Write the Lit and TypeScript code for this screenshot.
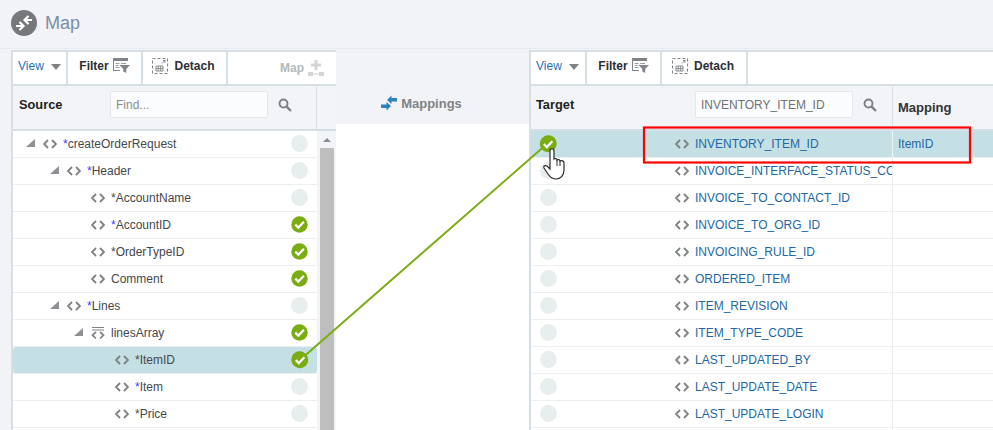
import { LitElement, html, css, svg } from "lit";
import { customElement } from "lit/decorators.js";

type Src = { name: string; req?: "blue" | "dark"; level: number; tri?: boolean; arr?: boolean; ok?: boolean; sel?: boolean };
const source: Src[] = [
  { name: "createOrderRequest", req: "blue", level: 0, tri: true },
  { name: "Header", req: "blue", level: 1, tri: true },
  { name: "AccountName", req: "dark", level: 2 },
  { name: "AccountID", req: "blue", level: 2, ok: true },
  { name: "OrderTypeID", req: "dark", level: 2, ok: true },
  { name: "Comment", level: 2, ok: true },
  { name: "Lines", req: "blue", level: 1, tri: true },
  { name: "linesArray", level: 2, tri: true, arr: true, ok: true },
  { name: "ItemID", req: "dark", level: 3, ok: true, sel: true },
  { name: "Item", req: "blue", level: 3 },
  { name: "Price", req: "dark", level: 3 },
  { name: "", level: 3 },
];
const target = [
  "INVENTORY_ITEM_ID",
  "INVOICE_INTERFACE_STATUS_CODE",
  "INVOICE_TO_CONTACT_ID",
  "INVOICE_TO_ORG_ID",
  "INVOICING_RULE_ID",
  "ORDERED_ITEM",
  "ITEM_REVISION",
  "ITEM_TYPE_CODE",
  "LAST_UPDATED_BY",
  "LAST_UPDATE_DATE",
  "LAST_UPDATE_LOGIN",
  "",
];

const code = html`<svg class="code" width="14" height="10" viewBox="0 0 14 10"><path d="M5 1 1 5l4 4M9 1l4 4-4 4" fill="none" stroke="#7f8285" stroke-width="1.9"/></svg>`;
const arr = html`<svg class="code" width="14" height="14" viewBox="0 0 14 14"><path d="M1 1.500h12M1 4h12" stroke="#7f8285" stroke-width="1.200"/><path d="M5 6 1.500 9.200 5 12.500M9 6l3.500 3.200L9 12.500" fill="none" stroke="#7f8285" stroke-width="1.700"/></svg>`;
const tri = html`<svg class="tri" width="9" height="9" viewBox="0 0 9 9"><path d="M9 0v8H0z" fill="#8d9094"/></svg>`;
const okIcon = html`<svg class="bubble" width="17" height="17" viewBox="0 0 17 17"><circle cx="8.500" cy="8.500" r="8.200" fill="#79ad12"/><path d="m4.300 8.600 3 3 5.600-5.800" fill="none" stroke="#fff" stroke-width="2.200"/></svg>`;
const emptyIcon = html`<svg class="bubble" width="17" height="17" viewBox="0 0 17 17"><circle cx="8.500" cy="8.500" r="8.400" fill="#e8eded"/></svg>`;
const search = html`<svg width="14" height="14" viewBox="0 0 14 14"><circle cx="5.500" cy="5.500" r="4" fill="none" stroke="#7d8084" stroke-width="1.900"/><path d="m8.600 8.600 4.400 4.400" stroke="#7d8084" stroke-width="2.400"/></svg>`;
const filter = html`<svg width="17" height="15" viewBox="0 0 17 15"><path d="M0 0h15v3H0zM0 3h1v9h6v1H0z" fill="#808488"/><path d="M2.500 5h4v1h-4zM2.500 7h3v1h-3zM2.500 9h4v1h-4zM8 5h5v1H8z" fill="#9a9da0"/><path d="M6.500 7H17l-3.800 4v4l-2.900-1.500V11z" fill="#808488"/></svg>`;
const detach = html`<svg width="16" height="16" viewBox="0 0 16 16"><rect x=".5" y=".5" width="15" height="15" fill="none" stroke="#808488" stroke-dasharray="3 2"/><path d="M4 8h7v5H4zM4 10.500h7M6.300 8v5M8.700 8v5" fill="none" stroke="#808488" stroke-width=".9"/><path d="m10 5.500 3-3M11 2.500h2v2" fill="none" stroke="#808488"/></svg>`;
const mapAdd = html`<svg width="16" height="17" viewBox="0 0 16 17"><path d="M6.500 0h3v3.500H13v3H9.500V10h-3V6.500H3v-3h3.500z" fill="#d2d4d6"/><path d="M0 12h5v4H0zM11 12h5v4h-5z" fill="#d2d4d6"/><path d="M5 14h6" stroke="#d2d4d6"/></svg>`;

@customElement("app-root")
export class AppRoot extends LitElement {
  static styles = css`
    :host { display: block; width: 993px; height: 430px; overflow: hidden; position: relative; background: #f2f3f6; font-family: "Liberation Sans", Arial, sans-serif; font-size: 12px; color: #3f4347; }
    .title { height: 49px; display: flex; align-items: flex-start; padding: 10px 0 0 11px; box-sizing: border-box; gap: 8px; border-bottom: 1px solid #e9ecef; font-size: 18px; color: #7b8ea6; line-height: 26px; }
    .columns { display: flex; height: 381px; overflow: hidden; }
    .panel { flex: none; background: #fff; border-left: 2px solid #d6dfe6; box-sizing: border-box; margin-top: 1px; }
    .left { width: 325px; margin-left: 11px; }
    .right { flex: 1; }
    .center { flex: none; width: 193px; background: #fff; }
    .band { height: 75px; background: #f1f3f6; display: flex; align-items: center; justify-content: center; gap: 4px; font-weight: bold; font-size: 13px; color: #7f8386; box-sizing: border-box; padding: 33px 22px 0 0; }
    .toolbar { display: flex; height: 36px; box-sizing: border-box; border-top: 2px solid #d6dfe6; border-bottom: 2px solid #d6dfe6; font-weight: bold; color: #2b2f33; }
    .tool { display: flex; align-items: center; border-right: 2px solid #d6dfe6; box-sizing: border-box; padding-bottom: 5px; }
    .view { width: 55px; padding-left: 5px; color: #1f71b8; font-weight: normal; gap: 7px; }
    .view i { width: 0; height: 0; border-left: 5px solid transparent; border-right: 5px solid transparent; border-top: 6px solid #7f8386; margin-top: 2px; }
    .filter { width: 75px; justify-content: center; gap: 4px; }
    .detach { width: 85px; justify-content: center; gap: 6px; padding-right: 2px; }
    .right .view { width: 56px; }
    .right .detach { width: 86px; }
    .mapbtn { flex: 1; display: flex; justify-content: flex-end; align-items: center; gap: 4px; padding: 0 12px 0 0; color: #b4b7ba; }
    .head { display: flex; height: 45px; box-sizing: border-box; background: #f2f4f7; border-bottom: 2px solid #d6dfe6; }
    .headmain { display: flex; flex: none; border-right: 1px solid #d6dfe6; box-sizing: border-box; }
    .left .headmain { width: 304px; }
    .right .headmain { width: 362px; }
    .headname { font-weight: bold; color: #222; font-size: 12.8px; padding: 11px 0 0 6px; width: 97px; box-sizing: border-box; }
    .right .headname { width: 164px; padding-left: 5px; }
    .find { width: 158px; height: 27px; margin-top: 5px; box-sizing: border-box; background: #fbfcfd; border: 1px solid #e4e8ec; border-radius: 2px; padding: 0 5px; display: flex; align-items: center; color: #6f7276; }
    .find.ph { color: #8a8d90; }
    .mag { margin: 12px 0 0 10px; }
    .body { display: flex; }
    .rows { width: 304px; flex: none; }
    .row { height: 27px; box-sizing: border-box; border-bottom: 1px solid #eceef0; display: flex; align-items: center; position: relative; color: #44484c; padding-bottom: 1px; }
    .row.sel { background: #c5e0e4; border-radius: 3px; }
    .ind { display: flex; align-items: center; flex: none; }
    .tri { flex: none; margin-right: 8px; }
    .code { flex: none; margin-right: 6px; }
    .star { color: #3a3aff; }
    .star.dark { color: #44484c; }
    .row .bubble { position: absolute; right: 9px; top: 4px; }
    .scrolltop { width: 19px; flex: none; background: #f2f4f7; }
    .scroll { width: 19px; flex: none; background: #f2f4f7; display: flex; flex-direction: column; align-items: center; }
    .arrow { width: 0; height: 0; border-left: 4px solid transparent; border-right: 4px solid transparent; border-bottom: 4px solid #8a8d90; margin: 7px 0 6px; }
    .thumb { width: 14px; flex: 1; background: #bebebe; }
    .mapping { font-weight: bold; padding: 14px 0 0 5px; color: #333; font-size: 13px; }
    .trow { height: 27px; box-sizing: border-box; border-bottom: 1px solid #eceef0; display: flex; }
    .trow.sel { background: #c5e0e4; }
    .tmain { width: 362px; flex: none; box-sizing: border-box; display: flex; align-items: center; overflow: hidden; white-space: nowrap; color: #2267a5; border-right: 1px solid #e8ecef; position: relative; padding: 0 0 1px 144px; }
    .sel .tmain { border-right-color: #eef6f7; }
    .tmain .bubble { position: absolute; left: 9px; top: 4px; }
    .tmap { padding: 6px 0 0 5px; color: #2267a5; }
    .overlay { position: absolute; left: 0; top: 0; pointer-events: none; }
  `;
  render() {
    return html`
      <div class="title">
        <svg width="26" height="26" viewBox="0 0 26 26"><circle cx="13" cy="13" r="13" fill="#76797c"/><path d="M21 10h-6.500M17.500 6l-4 4 4 4" fill="none" stroke="#fff" stroke-width="2.200"/><path d="M5 16h6.500M8.500 12l4 4-4 4" fill="none" stroke="#fff" stroke-width="2.200"/></svg>
        <span>Map</span>
      </div>
      <div class="columns">
        <section class="panel left">
          <div class="toolbar">
            <div class="tool view">View <i></i></div>
            <div class="tool filter">Filter ${filter}</div>
            <div class="tool detach">${detach} Detach</div>
            <div class="mapbtn">Map ${mapAdd}</div>
          </div>
          <div class="head">
            <div class="headmain">
              <div class="headname">Source</div>
              <div class="find ph">Find...</div>
              <div class="mag">${search}</div>
            </div>
            <div class="scrolltop"></div>
          </div>
          <div class="body">
            <div class="rows">${source.map((r) => this.srcRow(r))}</div>
            <div class="scroll"><div class="arrow"></div><div class="thumb"></div></div>
          </div>
        </section>
        <section class="center">
          <div class="band">
            <svg width="16" height="16" viewBox="0 0 16 16"><path d="M16 3h-5.500V.5L6 5l4.500 4V6.500H16zM0 9.500h5.500V7l4.500 4-4.500 4.500V13H0z" fill="#2a82c0"/></svg>
            <span>Mappings</span>
          </div>
        </section>
        <section class="panel right">
          <div class="toolbar">
            <div class="tool view">View <i></i></div>
            <div class="tool filter">Filter ${filter}</div>
            <div class="tool detach">${detach} Detach</div>
          </div>
          <div class="head">
            <div class="headmain">
              <div class="headname">Target</div>
              <div class="find">INVENTORY_ITEM_ID</div>
              <div class="mag">${search}</div>
            </div>
            <div class="mapping">Mapping</div>
          </div>
          ${target.map((t, i) => html`
            <div class="trow ${i === 0 ? "sel" : ""}">
              <div class="tmain">${i === 0 ? okIcon : emptyIcon}${t ? html`${code}<span>${t}</span>` : ""}</div>
              ${i === 0 ? html`<div class="tmap">ItemID</div>` : ""}
            </div>`)}
        </section>
      </div>
      <svg class="overlay" width="993" height="430" viewBox="0 0 993 430">
        ${svg`<path d="M300 360 548 143" stroke="#79ad12" stroke-width="2" fill="none"/>`}
        ${svg`<circle cx="300" cy="360" r="8.200" fill="#79ad12"/><path d="m295.800 360.100 3 3 5.600-5.800" fill="none" stroke="#fff" stroke-width="2.200"/>`}
        ${svg`<circle cx="548" cy="144" r="8.200" fill="#79ad12"/><path d="m543.800 144.100 3 3 5.600-5.800" fill="none" stroke="#fff" stroke-width="2.200"/>`}
        ${svg`<rect x="644" y="127.500" width="326" height="35" fill="none" stroke="#f00" stroke-width="2.200"/>`}
        ${svg`<path d="M550 151c0-3 4-3 4 0v8c2-1 3 0 3 1 2-1 3 0 3 1 2-1 4 0 4 2v7c0 5-3 9-8 9-4 0-6-2-8-5l-4-6c-1-2 1-3 3-2l3 3z" fill="#fff" stroke="#2b2b2b" stroke-width="1.200"/><path d="M557 160v6M560 161v5" stroke="#2b2b2b" stroke-width="1"/>`}
      </svg>
    `;
  }
  srcRow(r: Src) {
    const left = 13 + r.level * 24 + (r.tri ? 0 : 17);
    return html`<div class="row ${r.sel ? "sel" : ""}">
      ${r.name ? html`<div class="ind" style="padding-left:${left}px">${r.tri ? tri : ""}${r.arr ? arr : code}<span>${r.req ? html`<span class="star ${r.req === "dark" ? "dark" : ""}">*</span>` : ""}${r.name}</span></div>${r.ok ? okIcon : emptyIcon}` : ""}
    </div>`;
  }
}
